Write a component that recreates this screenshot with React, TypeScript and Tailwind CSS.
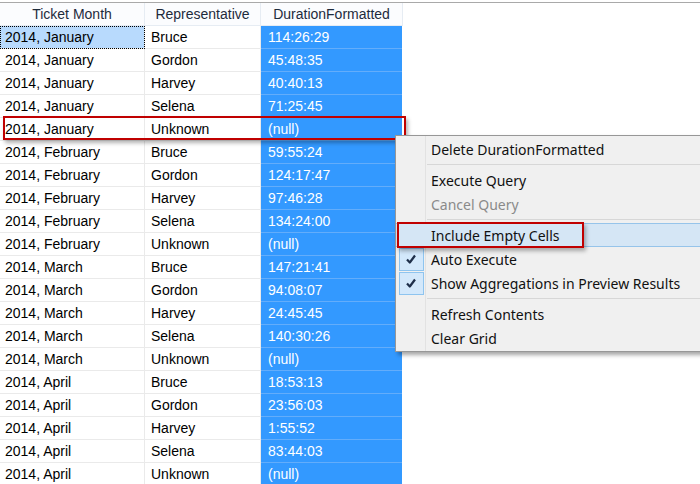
import React from "react";

const rows: [string, string, string][] = [
  ["2014, January", "Bruce", "114:26:29"],
  ["2014, January", "Gordon", "45:48:35"],
  ["2014, January", "Harvey", "40:40:13"],
  ["2014, January", "Selena", "71:25:45"],
  ["2014, January", "Unknown", "(null)"],
  ["2014, February", "Bruce", "59:55:24"],
  ["2014, February", "Gordon", "124:17:47"],
  ["2014, February", "Harvey", "97:46:28"],
  ["2014, February", "Selena", "134:24:00"],
  ["2014, February", "Unknown", "(null)"],
  ["2014, March", "Bruce", "147:21:41"],
  ["2014, March", "Gordon", "94:08:07"],
  ["2014, March", "Harvey", "24:45:45"],
  ["2014, March", "Selena", "140:30:26"],
  ["2014, March", "Unknown", "(null)"],
  ["2014, April", "Bruce", "18:53:13"],
  ["2014, April", "Gordon", "23:56:03"],
  ["2014, April", "Harvey", "1:55:52"],
  ["2014, April", "Selena", "83:44:03"],
  ["2014, April", "Unknown", "(null)"],
];

function Check() {
  return (
    <svg width="12" height="12" viewBox="0 0 12 12">
      <path d="M2 6.5 L4.8 9.5 L10 2.5" fill="none" stroke="#1f2f4a" strokeWidth="2.2" strokeLinejoin="round" />
    </svg>
  );
}

function MenuItem({
  label,
  disabled,
  checked,
  highlight,
}: {
  label: string;
  disabled?: boolean;
  checked?: boolean;
  highlight?: boolean;
}) {
  return (
    <div
      className={`relative flex h-[24px] items-center ${
        highlight ? "bg-[#d5e6f5] border-y border-[#96c4ea]" : ""
      }`}
    >
      <div className="flex w-[30px] shrink-0 justify-center items-center h-full">
        {checked && (
          <div className="flex h-[23px] w-[25px] items-center justify-center border border-[#8ec4ef] bg-[#d3e8fb]">
            <Check />
          </div>
        )}
      </div>
      <div className={`pl-[5px] ${disabled ? "text-[#8a8a8a]" : "text-[#111]"}`}>{label}</div>
    </div>
  );
}

function Sep() {
  return (
    <div className="flex h-[7px] items-center">
      <div className="w-[31px]" />
      <div className="h-px flex-1 bg-[#d7d7d7]" />
    </div>
  );
}

export default function App() {
  return (
    <div className="relative h-[484px] w-[700px] overflow-hidden bg-white" style={{ fontFamily: "'Liberation Sans', Arial, sans-serif" }}>
      <div className="h-[2px] bg-white" />
      <div className="h-px bg-[#a9a9a9]" />
      {/* header */}
      <div className="flex h-[23px] text-[14px] text-[#1e2b3c]">
        <div className="flex w-[145px] items-center justify-center border-r border-b border-[#e6ecf3] bg-[#fbfcfe]">Ticket Month</div>
        <div className="flex w-[116px] items-center justify-center border-r border-b border-[#e6ecf3] bg-[#fbfcfe]">Representative</div>
        <div className="flex w-[142px] items-center justify-center border-r border-b border-[#e6ecf3] bg-[#fbfcfe]">DurationFormatted</div>
        <div className="flex-1" />
      </div>
      {rows.map((r, i) => (
        <div key={i} className="flex h-[23px] text-[14px]">
          <div
            className={`flex w-[145px] items-center pl-[5px] border-r border-b border-[#eaeaea] text-black ${
              i === 0 ? "bg-[#b8dafd] outline outline-1 outline-dotted outline-black -outline-offset-1" : ""
            }`}
          >
            {r[0]}
          </div>
          <div className="flex w-[116px] items-center pl-[6px] border-r border-b border-[#eaeaea] text-black">{r[1]}</div>
          <div className="flex w-[141px] items-center pl-[7px] border-b border-[#63adfb] bg-[#3399ff] text-white">{r[2]}</div>
        </div>
      ))}

      {/* red highlight around row */}
      <div className="absolute left-[3px] top-[116px] h-[24px] w-[403px] border-2 border-[#c00000] shadow-[2px_3px_4px_rgba(0,0,0,0.3)]" />

      {/* context menu */}
      <div
        className="absolute left-[395px] top-[135px] w-[320px] border border-[#979797] bg-[#f0f0f0] pt-[1px] pb-[1px] text-[14px] shadow-[3px_3px_4px_rgba(0,0,0,0.35)]"
        style={{ fontFamily: "'Noto Sans', 'Open Sans', sans-serif" }}
      >
        <div className="absolute left-[29px] top-0 bottom-0 w-px bg-[#e2e2e2]" />
        <MenuItem label="Delete DurationFormatted" />
        <Sep />
        <MenuItem label="Execute Query" />
        <MenuItem label="Cancel Query" disabled />
        <Sep />
        <MenuItem label="Include Empty Cells" highlight />
        <MenuItem label="Auto Execute" checked />
        <MenuItem label="Show Aggregations in Preview Results" checked />
        <Sep />
        <MenuItem label="Refresh Contents" />
        <MenuItem label="Clear Grid" />
      </div>

      {/* red highlight around menu item */}
      <div className="absolute left-[397px] top-[222px] h-[26px] w-[187px] border-2 border-[#c00000] shadow-[2px_3px_4px_rgba(0,0,0,0.3)]" />
    </div>
  );
}
